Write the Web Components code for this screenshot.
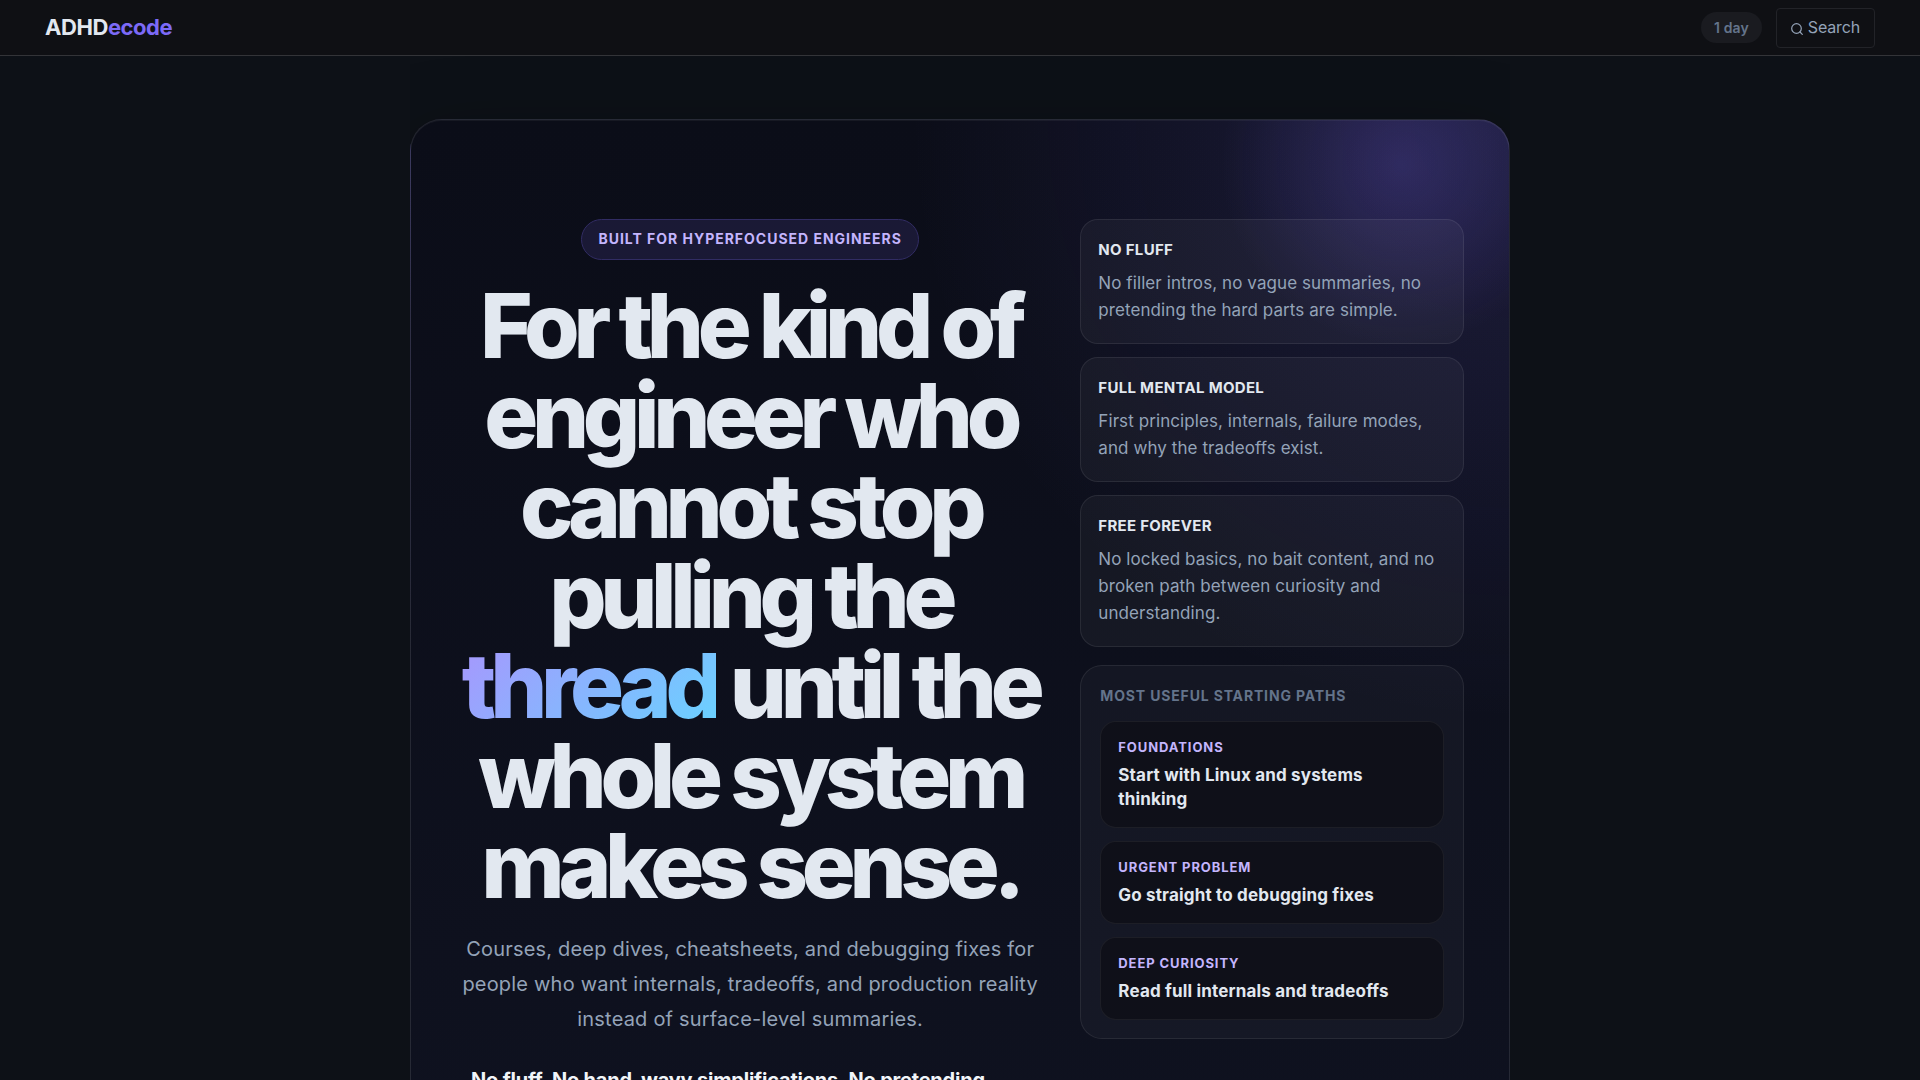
<!DOCTYPE html>
<html lang="en">
<head>
<meta charset="utf-8">
<title>ADHDecode</title>
<style>
  html { background: #0d1117; }
  body { margin: 0; background: #0d1117; color: #e2e8f0; font-family: Inter, sans-serif; font-size: 16px; line-height: 1.6; }
</style>
</head>
<body>
<adhd-page></adhd-page>
<script>
const define = (name, html) => {
  const template = document.createElement('template');
  template.innerHTML = html;
  customElements.define(name, class extends HTMLElement {
    constructor() {
      super();
      this.attachShadow({ mode: 'open' }).append(template.content.cloneNode(true));
    }
  });
};

define('site-header', `
<style>
  :host { display: block; }
  header { display: flex; align-items: center; justify-content: space-between; height: 55px; padding: 0 45px; background: #0f1014; border-bottom: 1px solid #333438; }
  .logo { padding-bottom: 2px; color: #e2e8f0; text-decoration: none; font-size: 22px; font-weight: 700; line-height: 32px; letter-spacing: -.02em; }
  .logo span { color: #7c6af7; }
  nav { display: flex; align-items: center; gap: 14px; }
  .streak { padding: 4px 13px; border-radius: 16px; background: #1a1b20; color: #64748b; font-size: 14px; font-weight: 600; line-height: 23px; letter-spacing: .01em; }
  button { display: flex; align-items: center; gap: 5px; height: 40px; padding: 0 14px 2px; border: 1px solid #222328; border-radius: 4px; background: none; color: #94a3b8; font: 400 16px/24px Inter, sans-serif; letter-spacing: -.01em; }
  svg { width: 12px; height: 12px; margin-top: 4px; }
</style>
<header>
  <a class="logo" href="#">ADHD<span>ecode</span></a>
  <nav>
    <span class="streak">1 day</span>
    <button type="button">
      <svg viewBox="0 0 12 12" fill="none" stroke="currentColor" stroke-width="1.2" stroke-linecap="round"><circle cx="5.5" cy="5.5" r="4.8"/><path d="M9 9 11.3 11.3"/></svg>
      Search
    </button>
  </nav>
</header>`);

define('principle-card', `
<style>
  :host { display: block; padding: 18px 17px 19px; border: 1px solid rgba(255,255,255,.08); border-radius: 18px; background: rgba(255,255,255,.04); }
  h3 { margin: 0 0 8px; color: #e2e8f0; font-size: 15px; font-weight: 700; line-height: 24px; letter-spacing: .02em; text-transform: uppercase; }
  p { margin: 0; color: #94a3b8; font-size: 17px; line-height: 27px; letter-spacing: .005em; }
</style>
<h3><slot name="title"></slot></h3>
<p><slot></slot></p>`);

define('path-link', `
<style>
  :host { display: block; }
  a { display: block; padding: 14px 17px 16px; border: 1px solid rgba(255,255,255,.06); border-radius: 16px; background: #0f1019; text-decoration: none; }
  .kicker { display: block; margin-bottom: 5px; color: #c4b5fd; font-size: 13px; font-weight: 700; line-height: 22px; letter-spacing: .07em; text-transform: uppercase; }
  strong { display: block; color: #e2e8f0; font-size: 17px; font-weight: 700; line-height: 24px; letter-spacing: .01em; }
</style>
<a href="#"><span class="kicker"><slot name="kicker"></slot></span><strong><slot></slot></strong></a>`);

define('path-panel', `
<style>
  :host { display: flex; flex-direction: column; gap: 13px; padding: 18px 19px; border: 1px solid rgba(255,255,255,.08); border-radius: 22px; background: rgba(255,255,255,.03); }
  h2 { margin: 0 0 1px; color: #64748b; font-size: 14px; font-weight: 700; line-height: 23px; letter-spacing: .06em; text-transform: uppercase; }
</style>
<h2><slot name="title"></slot></h2>
<slot></slot>`);

define('hero-copy', `
<style>
  :host { display: flex; flex-direction: column; align-items: center; gap: 21px; text-align: center; }
  .pill { padding: 7px 16px 9px; border: 1px solid #312c63; border-radius: 21px; background: #1a1935; color: #c4b5fd; font-size: 14px; font-weight: 700; line-height: 23px; letter-spacing: .07em; text-transform: uppercase; }
  h1 { margin: 0; color: #e2e8f0; font-size: 90px; font-weight: 800; line-height: 90px; letter-spacing: -.07em; }
  em { font-style: normal; color: transparent; background: linear-gradient(135deg, #a995fd, #67d4ff); -webkit-background-clip: text; background-clip: text; }
  p { margin: 0; color: #94a3b8; font-size: 20px; line-height: 35px; letter-spacing: .01em; }
  .promise { align-self: flex-start; max-width: 544px; margin-top: 6px; color: #f1f5f9; font-weight: 700; line-height: 32px; letter-spacing: -.01em; }
</style>
<span class="pill">Built for hyperfocused engineers</span>
<h1>For the kind of engineer who cannot stop pulling the <em>thread</em> until the whole system makes sense.</h1>
<p>Courses, deep dives, cheatsheets, and debugging fixes for people who want internals, tradeoffs, and production reality instead of surface-level summaries.</p>
<p class="promise">No fluff. No hand-wavy simplifications. No pretending complex systems are simple.</p>`);

define('hero-card', `
<style>
  :host { box-sizing: border-box; display: grid; grid-template-columns: minmax(0, 23fr) minmax(0, 15fr); column-gap: 36px; align-items: start; max-width: 1100px; margin: 63px auto 0; padding: 99px 45px; border: 1px solid rgba(255,255,255,.1); border-radius: 32px;
    background:
      radial-gradient(circle 180px at calc(100% - 108px) 45px, rgba(124,106,247,.22), transparent),
      radial-gradient(circle 600px at 100% 0, rgba(124,106,247,.16), transparent),
      linear-gradient(180deg, #0b0d18, #0f1220);
    box-shadow: 0 24px 80px rgba(0,0,0,.35), inset 0 1px 0 rgba(255,255,255,.05);
    clip-path: inset(-63px 0 0); }
  .side { display: flex; flex-direction: column; gap: 18px; }
  .principles { display: flex; flex-direction: column; gap: 13px; }
</style>
<slot name="copy"></slot>
<div class="side">
  <div class="principles"><slot name="principles"></slot></div>
  <slot name="paths"></slot>
</div>`);

define('adhd-page', `
<style>
  :host { display: block; height: 100vh; overflow-y: auto; scrollbar-width: none; }
</style>
<site-header></site-header>
<main>
  <hero-card>
    <hero-copy slot="copy"></hero-copy>
    <principle-card slot="principles"><span slot="title">No fluff</span>No filler intros, no vague summaries, no pretending the hard parts are simple.</principle-card>
    <principle-card slot="principles"><span slot="title">Full mental model</span>First principles, internals, failure modes, and why the tradeoffs exist.</principle-card>
    <principle-card slot="principles"><span slot="title">Free forever</span>No locked basics, no bait content, and no broken path between curiosity and understanding.</principle-card>
    <path-panel slot="paths">
      <span slot="title">Most useful starting paths</span>
      <path-link><span slot="kicker">Foundations</span>Start with Linux and systems thinking</path-link>
      <path-link><span slot="kicker">Urgent problem</span>Go straight to debugging fixes</path-link>
      <path-link><span slot="kicker">Deep curiosity</span>Read full internals and tradeoffs</path-link>
    </path-panel>
  </hero-card>
</main>`);
</script>
</body>
</html>
